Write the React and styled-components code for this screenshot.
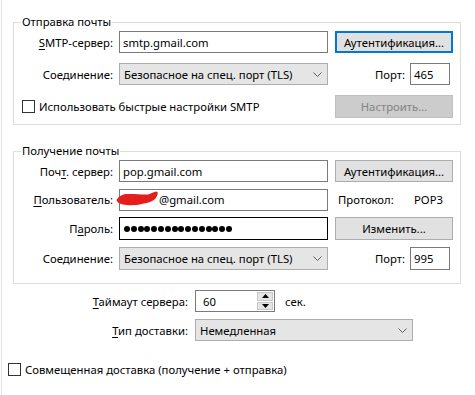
import React from 'react';
import styled, { createGlobalStyle } from 'styled-components';

const GlobalStyle = createGlobalStyle`
  html, body {
    margin: 0;
    background: #fff;
  }
  body {
    font-family: "Noto Sans", "Segoe UI", sans-serif;
    font-size: 11.3px;
    color: #000;
  }
`;

const Window = styled.div`
  width: 474px;
  height: 395px;
  box-sizing: border-box;
  margin-left: 1px;
  border-left: 1px solid #e3e3e3;
  padding: 14px 0 0 11px;
  display: flex;
  flex-direction: column;
`;

const Group = styled.fieldset`
  margin: ${(p) => (p.$first ? '0' : '18px 0 0')};
  padding: 1px 0 ${(p) => p.$bottom}px 0;
  width: 448px;
  box-sizing: border-box;
  min-width: 0;
  border: 1px solid #dcdcdc;
`;

const Legend = styled.legend`
  margin-left: 7px;
  padding: 0 1px;
  line-height: 16px;
`;

const FormGrid = styled.div`
  display: grid;
  grid-template-columns: 99px 210px 118px;
  grid-template-rows: ${(p) => p.$rows};
  column-gap: 6px;
  row-gap: ${(p) => p.$gap}px;
`;

const Label = styled.div`
  display: flex;
  align-items: center;
  justify-content: flex-end;
  white-space: nowrap;
`;

const Key = styled.span`
  text-decoration: underline;
  text-underline-offset: 2px;
`;

const Field = styled.div`
  position: relative;
  width: ${(p) => p.$width || 209}px;
  height: 100%;
  box-sizing: border-box;
  border: 1px solid ${(p) => (p.$dark ? '#000' : '#7a7a7a')};
  background: #fff;
  display: flex;
  align-items: center;
  padding: 0 3px 0 ${(p) => p.$indent || 3}px;
  white-space: nowrap;
`;

const Combo = styled.div`
  width: ${(p) => p.$width || 209}px;
  height: 100%;
  box-sizing: border-box;
  border: 1px solid #adadad;
  background: #e5e5e5;
  display: flex;
  align-items: center;
  justify-content: space-between;
  padding: 0 5px 0 4px;
  white-space: nowrap;
`;

const Button = styled.button`
  width: 118px;
  height: 100%;
  box-sizing: border-box;
  margin: 0;
  padding: 0;
  font: inherit;
  color: #000;
  background: #e1e1e1;
  border: 1px solid #adadad;
  ${(p) => p.$focused && 'border: 2px solid #0078d7;'}
  &:disabled {
    background: #cccccc;
    border-color: #bfbfbf;
    color: #838383;
  }
`;

const PortCell = styled.div`
  display: flex;
  align-items: center;
  justify-content: flex-end;
  gap: 5px;
  padding-right: 3px;
`;

const PortInput = styled(Field)`
  width: 40px;
`;

const InfoCell = styled.div`
  display: flex;
  align-items: center;
  justify-content: space-between;
  padding: 0 10px 0 3px;
`;

const CheckRow = styled.label`
  display: flex;
  align-items: center;
  gap: 4px;
  padding-left: ${(p) => p.$indent || 0}px;
  ${(p) => p.$span && 'grid-column: 1 / 3;'}
  ${(p) => p.$offset && `margin: ${p.$offset};`}
`;

const Box = styled.span`
  width: 13px;
  height: 13px;
  box-sizing: border-box;
  border: 1px solid #333;
  background: #fff;
  flex: none;
`;

const Scribble = styled.svg`
  position: absolute;
  left: -4px;
  top: 1px;
`;

const Dots = styled.div`
  display: flex;
  align-items: center;
  gap: 0.8px;
  padding-left: 1px;
`;

const Dot = styled.span`
  width: 6px;
  height: 6px;
  border-radius: 50%;
  background: #000;
`;

const Extra = styled.div`
  display: grid;
  grid-template-columns: 175px auto;
  grid-template-rows: 22px 22px;
  column-gap: 7px;
  row-gap: 7px;
  margin-top: 6px;
`;

const SpinRow = styled.div`
  display: flex;
  align-items: center;
  gap: 10px;
`;

const Spin = styled.div`
  width: 80px;
  height: 22px;
  box-sizing: border-box;
  border: 1px solid #7a7a7a;
  display: flex;
  align-items: center;
  padding: 1px;
`;

const SpinValue = styled.span`
  flex: 1;
  padding-left: 6px;
`;

const SpinButtons = styled.div`
  width: 16px;
  height: 100%;
  display: flex;
  flex-direction: column;
  gap: 1px;
`;

const SpinPart = styled.div`
  flex: 1;
  background: #e5e5e5;
  border: 1px solid #c8c8c8;
  display: flex;
  align-items: center;
  justify-content: center;
`;

const Chevron = () => (
  <svg width="9" height="5" viewBox="0 0 9 5">
    <polyline points="0.5,0.5 4.5,4.5 8.5,0.5" fill="none" stroke="#606060" strokeWidth="1" />
  </svg>
);

const Arrow = ({ up }) => (
  <svg width="7" height="4" viewBox="0 0 7 4">
    <polygon points={up ? '0,4 7,4 3.5,0' : '0,0 7,0 3.5,4'} fill="#000" />
  </svg>
);

const App = () => (
  <>
    <GlobalStyle />
    <Window>
      <Group $first $bottom={6}>
        <Legend>Отправка почты</Legend>
        <FormGrid $rows="22px 22px 23px" $gap={10}>
          <Label>
            <span>
              <Key>S</Key>MTP-сервер:
            </span>
          </Label>
          <Field>smtp.gmail.com</Field>
          <Button $focused>Аутентификация...</Button>

          <Label>Соединение:</Label>
          <Combo>
            <span>Безопасное на спец. порт (TLS)</span>
            <Chevron />
          </Combo>
          <PortCell>
            <span>Порт:</span>
            <PortInput>465</PortInput>
          </PortCell>

          <CheckRow $span $indent={8}>
            <Box />
            <span>Использовать быстрые настройки SMTP</span>
          </CheckRow>
          <Button disabled>Настроить...</Button>
        </FormGrid>
      </Group>

      <Group $bottom={13}>
        <Legend>Получение почты</Legend>
        <FormGrid $rows="22px 22px 23px 23px" $gap={6.7}>
          <Label>
            <span>
              Поч<Key>т</Key>. сервер:
            </span>
          </Label>
          <Field>pop.gmail.com</Field>
          <Button>Аутентификация...</Button>

          <Label>
            <span>
              <Key>П</Key>ользователь:
            </span>
          </Label>
          <Field $indent={39}>
            <Scribble width="44" height="16" viewBox="0 0 44 16">
              <path
                d="M0.5 9 C2 6 6 3.5 10 3 C18 2.5 26 4 32 3.5 C35 3 38 0.5 40.5 0.5 C42.5 1 42 4 39.5 7.5 C36 11 31 12 26 13 C20 14.5 12 14.5 7 13.5 C3 12.5 1 11 0.5 9 Z"
                fill="#e51d1d"
              />
            </Scribble>
            @gmail.com
          </Field>
          <InfoCell>
            <span>Протокол:</span>
            <span>POP3</span>
          </InfoCell>

          <Label>
            <span>
              П<Key>а</Key>роль:
            </span>
          </Label>
          <Field $dark>
            <Dots>
              {Array.from({ length: 16 }).map((_, i) => (
                <Dot key={i} />
              ))}
            </Dots>
          </Field>
          <Button>Изменить...</Button>

          <Label>Соединение:</Label>
          <Combo>
            <span>Безопасное на спец. порт (TLS)</span>
            <Chevron />
          </Combo>
          <PortCell>
            <span>Порт:</span>
            <PortInput>995</PortInput>
          </PortCell>
        </FormGrid>
      </Group>

      <Extra>
        <Label>
          <span>
            <Key>Т</Key>аймаут сервера:
          </span>
        </Label>
        <SpinRow>
          <Spin>
            <SpinValue>60</SpinValue>
            <SpinButtons>
              <SpinPart>
                <Arrow up />
              </SpinPart>
              <SpinPart>
                <Arrow />
              </SpinPart>
            </SpinButtons>
          </Spin>
          <span>сек.</span>
        </SpinRow>

        <Label>
          <span>
            <Key>Т</Key>ип доставки:
          </span>
        </Label>
        <Combo $width={218}>
          <span>Немедленная</span>
          <Chevron />
        </Combo>
      </Extra>

      <CheckRow $offset="21px 0 0 -5px">
        <Box />
        <span>Совмещенная доставка (получение + отправка)</span>
      </CheckRow>
    </Window>
  </>
);

export default App;
